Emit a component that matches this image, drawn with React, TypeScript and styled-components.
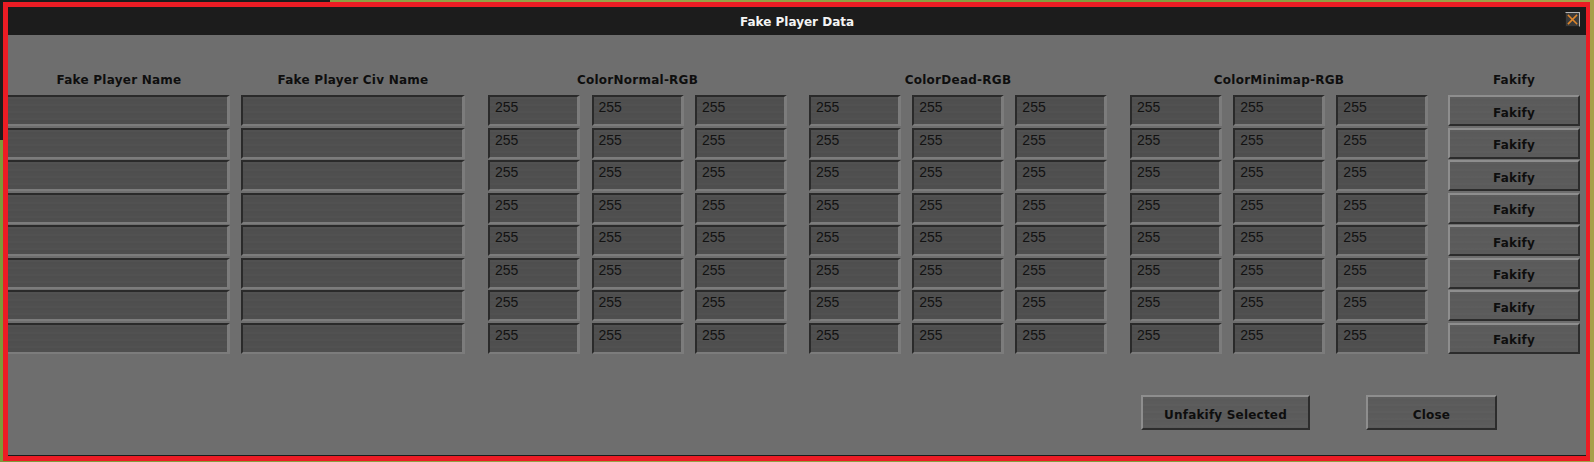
import React from "react";
import styled, { createGlobalStyle } from "styled-components";

const GlobalStyle = createGlobalStyle`
  html, body {
    margin: 0;
    padding: 0;
  }
  body {
    width: 1594px;
    height: 462px;
    overflow: hidden;
    background:
      linear-gradient(#1c1c1c, #1c1c1c) 0 0 / 330px 140px no-repeat,
      linear-gradient(90deg, #7d9a3a, #9aa248 40%, #7f9c3c 70%, #a6a04a);
  }
`;

const Window = styled.div`
  box-sizing: border-box;
  width: 1587px;
  height: 459px;
  margin: 2px 0 0 3px;
  border-style: solid;
  border-color: #ec1c24;
  border-width: 5px 4px 5px 5px;
  background: #6e6e6e;
  box-shadow: inset 0 -1px 0 #1a1a1a;
  display: flex;
  flex-direction: column;
  overflow: hidden;
`;

const TitleBar = styled.div`
  position: relative;
  height: 28px;
  flex: none;
  background: #1c1c1c;
  display: flex;
  align-items: center;
  justify-content: center;
  padding-top: 2px;
  box-sizing: border-box;
`;

const Title = styled.span`
  font-family: "DejaVu Sans", Verdana, sans-serif;
  font-weight: bold;
  font-size: 12px;
  color: #f4f4f4;
`;

const CloseX = styled.div`
  position: absolute;
  right: 6px;
  top: 5px;
  width: 15px;
  height: 15px;
  box-sizing: border-box;
  background: #3a3a3a;
  border-style: solid;
  border-width: 1px;
  border-color: #b4b4b4 #b4b4b4 #202020 #202020;
  display: flex;
  align-items: center;
  justify-content: center;
`;

const Body = styled.div`
  flex: 1;
  padding-top: 31px;
  display: flex;
  flex-direction: column;
`;

const Table = styled.div`
  display: flex;
  flex-direction: column;
  gap: 1.5px;
`;

const Row = styled.div<{ $header?: boolean }>`
  display: flex;
  height: ${(p) => (p.$header ? "24px" : "31px")};
  margin-bottom: ${(p) => (p.$header ? "3.5px" : "0")};
`;

const Cell = styled.div<{ $w: number; $ml: number }>`
  flex: none;
  width: ${(p) => p.$w}px;
  margin-left: ${(p) => p.$ml}px;
  display: flex;
  gap: 11.5px;
`;

const Heading = styled.div`
  flex: 1;
  text-align: center;
  padding-top: 4px;
  line-height: 20px;
  font-family: "DejaVu Sans", Verdana, sans-serif;
  font-weight: bold;
  font-size: 12px;
  letter-spacing: 0.25px;
  color: #0e0e0e;
`;

const texture = `
  repeating-linear-gradient(
    180deg,
    rgba(255, 255, 255, 0.012) 0 2px,
    rgba(0, 0, 0, 0.015) 2px 4px,
    transparent 4px 7px
  )
`;

const Field = styled.div<{ $flush?: boolean }>`
  flex: 1;
  box-sizing: border-box;
  height: 31px;
  padding: 2px 5px;
  border-style: solid;
  border-width: 2px 3px 2px ${(p) => (p.$flush ? "0" : "2px")};
  border-color: #2a2a2a #7c7c7c #7c7c7c #2a2a2a;
  background: ${texture}, #4f4f4f;
  font-family: "Liberation Sans", Arial, sans-serif;
  font-size: 14px;
  line-height: 16px;
  color: #121212;
`;

const Button = styled.div<{ $w?: number }>`
  box-sizing: border-box;
  flex: ${(p) => (p.$w ? "none" : "1")};
  width: ${(p) => (p.$w ? `${p.$w}px` : "auto")};
  height: 100%;
  border-style: solid;
  border-width: 2px;
  border-color: #8e8e8e #2c2c2c #2c2c2c #8e8e8e;
  background: ${texture}, #5b5b5b;
  display: flex;
  align-items: center;
  justify-content: center;
  padding-top: 4px;
  font-family: "DejaVu Sans", Verdana, sans-serif;
  font-weight: bold;
  font-size: 12px;
  letter-spacing: 0.2px;
  color: #0e0e0e;
`;

const Footer = styled.div`
  margin-top: 41.5px;
  height: 35px;
  display: flex;
  justify-content: flex-end;
  gap: 56px;
  padding-right: 89px;
`;

const columns = [
  { key: "name", title: "Fake Player Name", w: 222, ml: 0 },
  { key: "civ", title: "Fake Player Civ Name", w: 224, ml: 11 },
  { key: "normal", title: "ColorNormal-RGB", w: 299, ml: 23 },
  { key: "dead", title: "ColorDead-RGB", w: 298, ml: 22 },
  { key: "minimap", title: "ColorMinimap-RGB", w: 298, ml: 23 },
  { key: "fakify", title: "Fakify", w: 132, ml: 20 },
];

const rows = Array.from({ length: 8 }, (_, i) => i);

function XIcon() {
  return (
    <svg width="11" height="11" viewBox="0 0 11 11">
      <path
        d="M1.5 1.5 L9.5 9.5 M9.5 1.5 L1.5 9.5"
        stroke="#e0862a"
        strokeWidth="1.6"
        strokeLinecap="square"
        fill="none"
      />
    </svg>
  );
}

function PlayerRow() {
  return (
    <Row>
      {columns.map((col) => (
        <Cell key={col.key} $w={col.w} $ml={col.ml}>
          {col.key === "name" && <Field $flush />}
          {col.key === "civ" && <Field />}
          {["normal", "dead", "minimap"].includes(col.key) &&
            ["r", "g", "b"].map((c) => <Field key={c}>255</Field>)}
          {col.key === "fakify" && <Button>Fakify</Button>}
        </Cell>
      ))}
    </Row>
  );
}

export default function App() {
  return (
    <>
      <GlobalStyle />
      <Window>
        <TitleBar>
          <Title>Fake Player Data</Title>
          <CloseX>
            <XIcon />
          </CloseX>
        </TitleBar>
        <Body>
          <Table>
            <Row $header>
              {columns.map((col) => (
                <Cell key={col.key} $w={col.w} $ml={col.ml}>
                  <Heading>{col.title}</Heading>
                </Cell>
              ))}
            </Row>
            {rows.map((i) => (
              <PlayerRow key={i} />
            ))}
          </Table>
          <Footer>
            <Button $w={169}>Unfakify Selected</Button>
            <Button $w={131}>Close</Button>
          </Footer>
        </Body>
      </Window>
    </>
  );
}
